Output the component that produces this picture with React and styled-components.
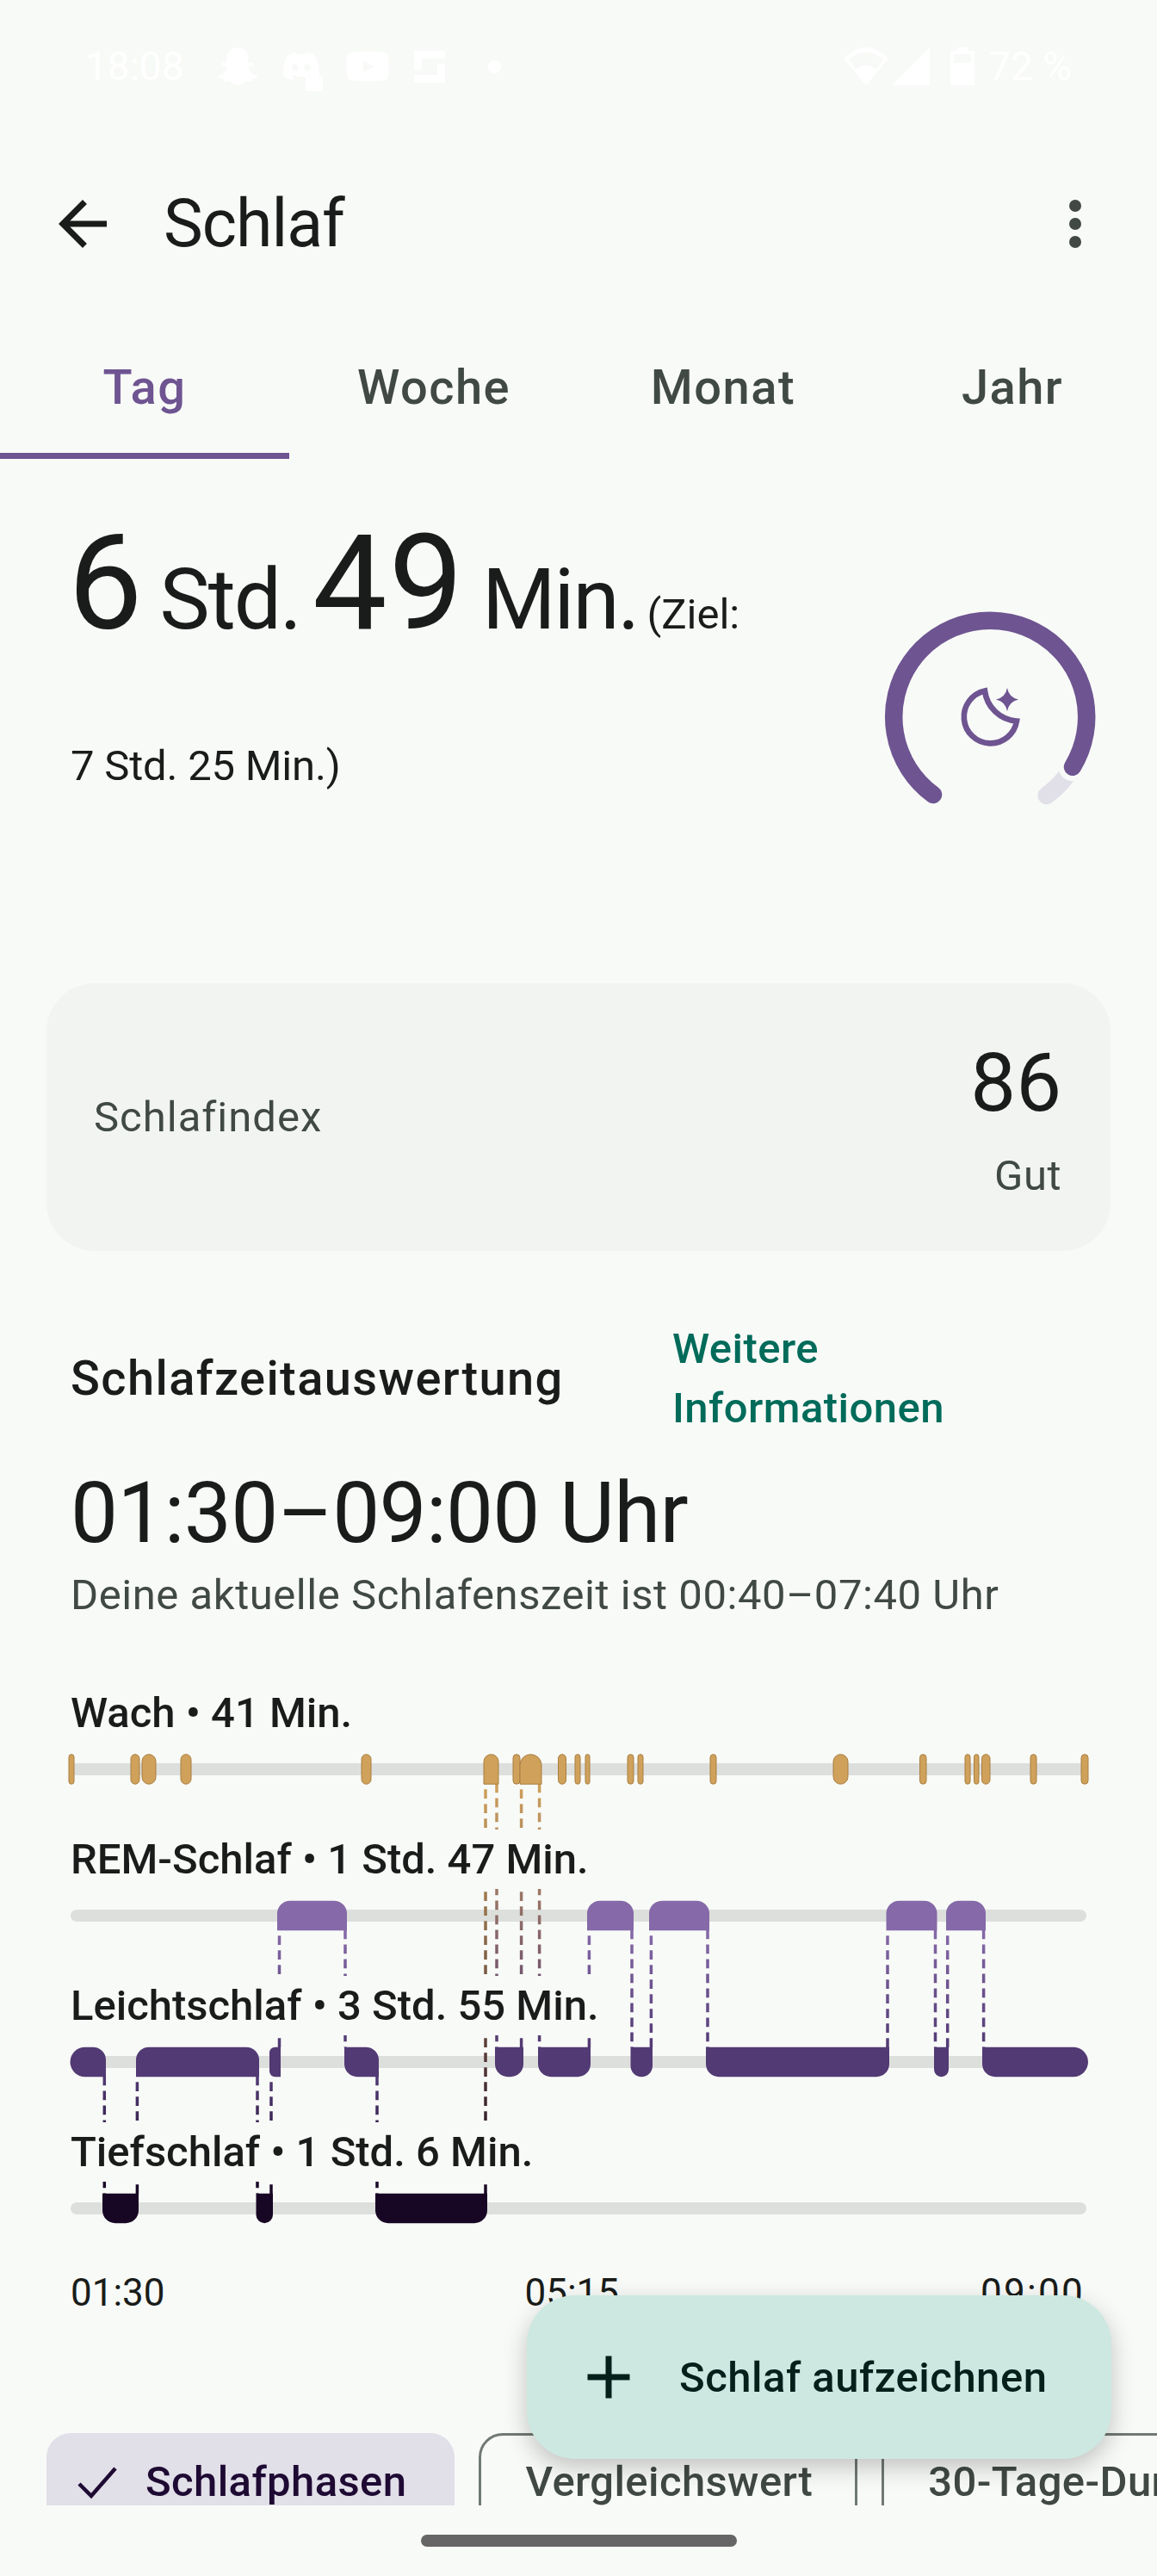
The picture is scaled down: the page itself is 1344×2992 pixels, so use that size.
import React from 'react';
import styled, { createGlobalStyle } from 'styled-components';
import { FaSnapchatGhost, FaDiscord, FaYoutube } from 'react-icons/fa';

const GlobalStyle = createGlobalStyle`
  html, body {
    margin: 0;
    padding: 0;
    background: #f8faf7;
  }
  * {
    box-sizing: border-box;
  }
`;

const Page = styled.div`
  position: relative;
  width: 1344px;
  height: 2992px;
  overflow: hidden;
  background: #f8faf7;
  color: #191c1a;
  font-family: Roboto, "Noto Sans", sans-serif;
`;

/* status bar */
const StatusBar = styled.div`
  height: 154px;
  padding: 0 99px;
  display: flex;
  align-items: center;
  justify-content: space-between;
  color: #ffffff;
  font-size: 46px;
`;

const StatusGroup = styled.div`
  display: flex;
  align-items: center;
  gap: ${(p) => p.$gap || 0}px;
`;

const StatusTime = styled.span`
  width: 126px;
`;

const StatusDot = styled.span`
  width: 15px;
  height: 15px;
  margin-left: 22px;
  border-radius: 50%;
  background: #ffffff;
`;

const DiscordMark = styled.span`
  position: relative;
  display: flex;
`;

const DiscordBubble = styled.span`
  position: absolute;
  right: -2px;
  bottom: -6px;
  width: 20px;
  height: 17px;
  background: #ffffff;
`;

const SignalSpacer = styled.span`
  width: 16px;
`;

const StatusPct = styled.span`
  margin-left: 12px;
`;

/* top bar */
const Header = styled.header`
  height: 212px;
  padding: 0 53px 0 54px;
  display: flex;
  align-items: center;
`;

const Title = styled.h1`
  flex: 1;
  margin: 0 0 0 52px;
  font-size: 77px;
  font-weight: 400;
  letter-spacing: -1px;
`;

const Tabs = styled.nav`
  height: 167px;
  display: grid;
  grid-template-columns: repeat(4, 336px);
`;

const Tab = styled.div`
  display: flex;
  align-items: center;
  justify-content: center;
  padding-top: 8px;
  font-size: 56px;
  font-weight: 500;
  letter-spacing: 1.5px;
  color: ${(p) => (p.$active ? '#6e5491' : '#404943')};
  border-bottom: 7px solid ${(p) => (p.$active ? '#6e5491' : 'transparent')};
`;

/* summary */
const Summary = styled.section`
  height: 609px;
  padding: 0 64px 0 82px;
  display: flex;
  justify-content: space-between;
`;

const SummaryText = styled.div`
  padding-top: 54px;
`;

const Headline = styled.div`
  height: 150px;
  margin-left: -3px;
  display: flex;
  align-items: baseline;
  white-space: nowrap;
`;

const BigNumber = styled.span`
  font-size: 154px;
  font-weight: 400;
  letter-spacing: ${(p) => p.$spacing}px;
  margin-right: ${(p) => p.$gap}px;
`;

const BigUnit = styled.span`
  font-size: 98px;
  letter-spacing: -2px;
  margin-right: 14px;
`;

const GoalText = styled.span`
  margin-left: -4px;
  font-size: 49px;
`;

const GoalLine = styled.div`
  margin-top: 124px;
  font-size: 49px;
  letter-spacing: -0.2px;
`;

const Gauge = styled.svg`
  margin-top: 170px;
  flex: none;
`;

/* sleep score */
const ScoreCard = styled.section`
  height: 311px;
  margin: 0 54px;
  padding: 0 57px 0 55px;
  border-radius: 56px;
  background: #f2f4f1;
  display: flex;
  align-items: center;
  justify-content: space-between;
`;

const ScoreLabel = styled.div`
  font-size: 49px;
  letter-spacing: 1px;
  color: #404943;
`;

const ScoreValue = styled.div`
  text-align: right;
`;

const ScoreNumber = styled.div`
  font-size: 94px;
  line-height: 114px;
`;

const ScoreWord = styled.div`
  margin-top: 22px;
  font-size: 49px;
  letter-spacing: 0.5px;
  color: #404943;
`;

/* schedule */
const SectionRow = styled.div`
  margin-top: 79px;
  padding: 0 82px;
  display: grid;
  grid-template-columns: 699px 1fr;
  align-items: center;
`;

const SectionTitle = styled.h2`
  margin: 0;
  font-size: 56px;
  font-weight: 500;
  letter-spacing: 1.4px;
`;

const MoreLink = styled.div`
  font-size: 49px;
  line-height: 69px;
  font-weight: 500;
  letter-spacing: 0.45px;
  color: #006b5a;
`;

const TimeRange = styled.div`
  margin-top: 28px;
  padding: 0 82px;
  font-size: 98px;
  line-height: 120px;
  letter-spacing: -0.7px;
`;

const Schedule = styled.div`
  padding: 0 82px;
  font-size: 49px;
  line-height: 70px;
  letter-spacing: 0.55px;
  color: #404943;
`;

/* chart: the lines run behind the labels, the labels mask them */
const Chart = styled.div`
  position: relative;
  margin-top: 67px;
  padding: 0 82px 99px;
  display: flex;
  flex-direction: column;
  align-items: flex-start;
  gap: 101px;
`;

const ChartDrawing = styled.svg`
  position: absolute;
  left: 0;
  top: 0;
`;

const StageLabel = styled.div`
  position: relative;
  height: 69px;
  font-size: 49px;
  line-height: 69px;
  font-weight: 500;
  background: #f8faf7;
`;

const Axis = styled.div`
  padding: 0 84px 0 82px;
  display: flex;
  justify-content: space-between;
  font-size: 44px;
  line-height: 60px;
`;

const AxisMiddle = styled.span`
  margin-right: 2px;
`;

const AxisEnd = styled.span`
  letter-spacing: 2.3px;
`;

/* chips */
const ChipRow = styled.div`
  height: 84px;
  margin-top: 133px;
  padding-left: 54px;
  display: flex;
  gap: 28px;
  overflow: hidden;
`;

const Chip = styled.div`
  flex: none;
  height: 112px;
  padding: 0 ${(p) => (p.$selected ? 56 : 49)}px 0 ${(p) => (p.$selected ? 36 : 51)}px;
  display: flex;
  align-items: center;
  gap: 33px;
  border-radius: 28px;
  font-size: 49px;
  font-weight: 500;
  letter-spacing: 0.4px;
  white-space: nowrap;
  color: ${(p) => (p.$selected ? '#1e0a33' : '#404943')};
  background: ${(p) => (p.$selected ? '#e1dfe8' : 'transparent')};
  border: ${(p) => (p.$selected ? 'none' : '3.5px solid #707973')};
`;

const Fab = styled.button`
  position: absolute;
  left: 612px;
  top: 2666px;
  width: 679px;
  height: 190px;
  padding: 0 0 0 53px;
  display: flex;
  align-items: center;
  gap: 40px;
  border: none;
  border-radius: 56px;
  background: #cde8e1;
  color: #05201a;
  font-family: inherit;
  font-size: 49px;
  font-weight: 500;
  letter-spacing: 0.5px;
  box-shadow: 0 10px 28px rgba(0, 0, 0, 0.22);
`;

const NavHandle = styled.div`
  width: 367px;
  height: 14px;
  margin: 34px auto 0;
  border-radius: 7px;
  background: #666666;
`;

const AMBER = '#cfa15b';
const REM = '#8569a8';
const LIGHT = '#523a74';
const DEEP = '#170624';

const RAILS = [2048, 2218, 2388, 2558];
const SEG_H = 34.5;

// [x0, x1, which corners are rounded]
const WAKE = [
  [80, 86, 'tfbf'], [152, 162, 'tfbf'], [165, 181, 'tfbf'], [210, 222, 'tfbf'], [420, 431, 'tfbf'],
  [562, 579, 't'], [596, 604, 'tfbf'], [604, 629, 't'], [648.5, 657.5, 'tfbf'], [668, 674, 'tfbf'],
  [680, 685, 'tfbf'], [729, 736, 'tfbf'], [741, 747, 'tfbf'], [825, 832, 'tfbf'], [968, 985, 'tfbf'],
  [1068.5, 1076, 'tfbf'], [1121, 1127, 'tfbf'], [1131.5, 1137, 'tfbf'], [1140.5, 1150, 'tfbf'],
  [1197, 1204, 'tfbf'], [1256, 1264, 'tfbf'],
];
const REM_SEGS = [[322, 403, 't'], [682, 736, 't'], [754, 824, 't'], [1029.5, 1088.5, 't'], [1099, 1145, 't']];
const LIGHT_SEGS = [
  [81.5, 123, 'lt'], [158, 301, 't'], [313, 326, 'l'], [400, 440, 'd'], [575, 608, 'b'], [625, 686, 'b'],
  [732.5, 758, 'b'], [820, 1033, 'b'], [1085, 1102, 'b'], [1141, 1264, 'lb'],
];
const DEEP_SEGS = [[119, 161, 'b'], [297.5, 317, 'b'], [436, 566, 'b']];

const segPath = ([x0, x1, kind], top) => {
  const w = x1 - x0;
  const y0 = top - 10.3;
  const y1 = y0 + SEG_H;
  const r = Math.min(15, w / 2);
  const full = Math.min(SEG_H / 2, w / 2);
  let [tl, tr, br, bl] = [0, 0, 0, 0];
  if (kind === 't') [tl, tr] = [r, r];
  if (kind === 'b') [br, bl] = [r, r];
  if (kind === 'tfbf') [tl, tr, br, bl] = [full, full, full, full];
  if (kind === 'lt') [tl, tr, bl] = [full, r, full];
  if (kind === 'l') [tl, bl] = [full, full];
  if (kind === 'd') [tr, bl] = [r, r];
  if (kind === 'lb') [tr, br, bl] = [full, full, r];
  return `M${x0 + tl} ${y0}H${x1 - tr}A${tr} ${tr} 0 0 1 ${x1} ${y0 + tr}V${y1 - br}A${br} ${br} 0 0 1 ${x1 - br} ${y1}H${x0 + bl}A${bl} ${bl} 0 0 1 ${x0} ${y1 - bl}V${y0 + tl}A${tl} ${tl} 0 0 1 ${x0 + tl} ${y0}Z`;
};

// x, y from, y to, colour from, colour to, edge of the segment it leaves from
const DASHES = [
  [564, 2072, 2548, AMBER, DEEP, 'l'], [577, 2072, 2378, AMBER, LIGHT, 'r'],
  [605.6, 2072, 2378, AMBER, LIGHT, 'l'], [626.6, 2072, 2378, AMBER, LIGHT, 'r'],
  [324.5, 2242, 2378, REM, LIGHT, 'l'], [401, 2242, 2378, REM, LIGHT, 'r'],
  [684.4, 2242, 2378, REM, LIGHT, 'l'], [734, 2242, 2378, REM, LIGHT, 'r'],
  [756.4, 2242, 2378, REM, LIGHT, 'l'], [822, 2242, 2378, REM, LIGHT, 'r'],
  [1031, 2242, 2378, REM, LIGHT, 'l'], [1086.5, 2242, 2378, REM, LIGHT, 'r'],
  [1100.7, 2242, 2378, REM, LIGHT, 'l'], [1142.6, 2242, 2378, REM, LIGHT, 'r'],
  [121.3, 2412, 2548, LIGHT, DEEP, 'r'], [159.4, 2412, 2548, LIGHT, DEEP, 'l'],
  [299, 2412, 2548, LIGHT, DEEP, 'r'], [315, 2412, 2548, LIGHT, DEEP, 'l'],
  [438, 2412, 2548, LIGHT, DEEP, 'r'],
];

const SleepChart = () => (
  <ChartDrawing width="1344" height="700" viewBox="0 1955 1344 700">
    <defs>
      {DASHES.map(([x, y0, y1, c0, c1], i) => (
        <linearGradient key={i} id={`dash${i}`} gradientUnits="userSpaceOnUse" x1={x} y1={y0} x2={x} y2={y1}>
          <stop offset="0" stopColor={c0} />
          <stop offset="1" stopColor={c1} />
        </linearGradient>
      ))}
    </defs>
    {RAILS.map((y) => (
      <rect key={y} x="82" y={y} width="1180" height="14" rx="7" fill="#dddfdc" />
    ))}
    {DASHES.map(([x, y0, y1, , , edge], i) => (
      <path
        key={i}
        d={`M${x} ${y0}V${y1}`}
        stroke={`url(#dash${i})`}
        strokeWidth="3.5"
        strokeDasharray="10.7 6.3"
        strokeDashoffset={edge === 'l' ? 10.7 : 0.4}
      />
    ))}
    {WAKE.map((s, i) => (
      <path key={i} d={segPath(s, RAILS[0])} fill={AMBER} stroke="#a97f42" strokeWidth="1" />
    ))}
    {REM_SEGS.map((s, i) => <path key={i} d={segPath(s, RAILS[1])} fill={REM} />)}
    {LIGHT_SEGS.map((s, i) => <path key={i} d={segPath(s, RAILS[2])} fill={LIGHT} />)}
    {DEEP_SEGS.map((s, i) => <path key={i} d={segPath(s, RAILS[3])} fill={DEEP} />)}
  </ChartDrawing>
);

const SleepGauge = () => (
  <Gauge width="260" height="260" viewBox="0 0 260 260">
    <path d="M195.7 221 A112 112 0 0 0 226 187.7" fill="none" stroke="#e1dfe8" strokeWidth="20.5" strokeLinecap="round" />
    <path d="M226 187.7 L226.5 187" fill="none" stroke="#f8faf7" strokeWidth="33" strokeLinecap="round" />
    <path d="M64 220 A112 112 0 1 1 226 187.7" fill="none" stroke="#6e5491" strokeWidth="20.5" strokeLinecap="round" />
    <path d="M124 99.5 A30.8 30.8 0 1 0 161 134.5 A40 40 0 0 1 124 99.5Z" fill="none" stroke="#6e5491" strokeWidth="6.6" strokeLinejoin="miter" />
    <path d="M150 96 Q152 107 163 109.5 Q152 112 150 123 Q148 112 137 109.5 Q148 107 150 96Z" fill="#6e5491" />
  </Gauge>
);

const BackIcon = () => (
  <svg width="84" height="84" viewBox="0 0 24 24" fill="#191c1a">
    <path d="M20 11H7.83l5.59-5.59L12 4l-8 8 8 8 1.41-1.41L7.83 13H20v-2z" />
  </svg>
);

const MoreIcon = () => (
  <svg width="84" height="84" viewBox="0 0 24 24" fill="#404943">
    <circle cx="12" cy="6" r="2" />
    <circle cx="12" cy="12" r="2" />
    <circle cx="12" cy="18" r="2" />
  </svg>
);

const PlusIcon = () => (
  <svg width="84" height="84" viewBox="0 0 24 24" fill="#05201a">
    <path d="M19 13h-6v6h-2v-6H5v-2h6V5h2v6h6v2z" />
  </svg>
);

const CheckIcon = () => (
  <svg width="46" height="46" viewBox="0 0 46 46" fill="none" stroke="#1e0a33" strokeWidth="4.5">
    <path d="M2 26 L16 40 L44 8" />
  </svg>
);

const BracketIcon = () => (
  <svg width="36" height="37" viewBox="0 0 36 37" fill="#fff">
    <path d="M0 0H36V9H9V22H0ZM36 37H0V28H27V15H36Z" />
  </svg>
);

const WifiIcon = () => (
  <svg width="52" height="44" viewBox="0 0 52 44" fill="#fff" fillRule="evenodd">
    <path d="M0 13 Q26 -13 52 13 L26 44Z M6 14 L14 26 Q26 16 38 26 L46 14 Q26 -3 6 14Z" />
  </svg>
);

const SignalIcon = () => (
  <svg width="44" height="44" viewBox="0 0 44 44" fill="#fff">
    <path d="M44 0V44H0Z" />
  </svg>
);

const BatteryIcon = () => (
  <svg width="28" height="44" viewBox="0 0 28 44" fill="#fff" fillRule="evenodd">
    <path d="M8 0H20V4H28V44H0V4H8Z M4 8V18H24V8Z" />
  </svg>
);

const App = () => (
  <Page>
    <GlobalStyle />
    <StatusBar>
      <StatusGroup $gap={28}>
        <StatusTime>18:08</StatusTime>
        <FaSnapchatGhost size={46} />
        <DiscordMark>
          <FaDiscord size={46} />
          <DiscordBubble />
        </DiscordMark>
        <FaYoutube size={52} />
        <BracketIcon />
        <StatusDot />
      </StatusGroup>
      <StatusGroup $gap={4}>
        <WifiIcon />
        <SignalIcon />
        <SignalSpacer />
        <BatteryIcon />
        <StatusPct>72 %</StatusPct>
      </StatusGroup>
    </StatusBar>

    <Header>
      <BackIcon />
      <Title>Schlaf</Title>
      <MoreIcon />
    </Header>

    <Tabs>
      <Tab $active>Tag</Tab>
      <Tab>Woche</Tab>
      <Tab>Monat</Tab>
      <Tab>Jahr</Tab>
    </Tabs>

    <Summary>
      <SummaryText>
        <Headline>
          <BigNumber $spacing={0} $gap={20}>6</BigNumber>
          <BigUnit>Std.</BigUnit>
          <BigNumber $spacing={2} $gap={20}>49</BigNumber>
          <BigUnit>Min.</BigUnit>
          <GoalText>(Ziel:</GoalText>
        </Headline>
        <GoalLine>7 Std. 25 Min.)</GoalLine>
      </SummaryText>
      <SleepGauge />
    </Summary>

    <ScoreCard>
      <ScoreLabel>Schlafindex</ScoreLabel>
      <ScoreValue>
        <ScoreNumber>86</ScoreNumber>
        <ScoreWord>Gut</ScoreWord>
      </ScoreValue>
    </ScoreCard>

    <SectionRow>
      <SectionTitle>Schlafzeitauswertung</SectionTitle>
      <MoreLink>Weitere<br />Informationen</MoreLink>
    </SectionRow>
    <TimeRange>01:30–09:00 Uhr</TimeRange>
    <Schedule>Deine aktuelle Schlafenszeit ist 00:40–07:40 Uhr</Schedule>

    <Chart>
      <SleepChart />
      <StageLabel>Wach • 41 Min.</StageLabel>
      <StageLabel>REM-Schlaf • 1 Std. 47 Min.</StageLabel>
      <StageLabel>Leichtschlaf • 3 Std. 55 Min.</StageLabel>
      <StageLabel>Tiefschlaf • 1 Std. 6 Min.</StageLabel>
    </Chart>

    <Axis>
      <span>01:30</span>
      <AxisMiddle>05:15</AxisMiddle>
      <AxisEnd>09:00</AxisEnd>
    </Axis>

    <ChipRow>
      <Chip $selected><CheckIcon />Schlafphasen</Chip>
      <Chip>Vergleichswert</Chip>
      <Chip>30-Tage-Durchschnitt</Chip>
    </ChipRow>

    <NavHandle />

    <Fab><PlusIcon />Schlaf aufzeichnen</Fab>
  </Page>
);

export default App;
